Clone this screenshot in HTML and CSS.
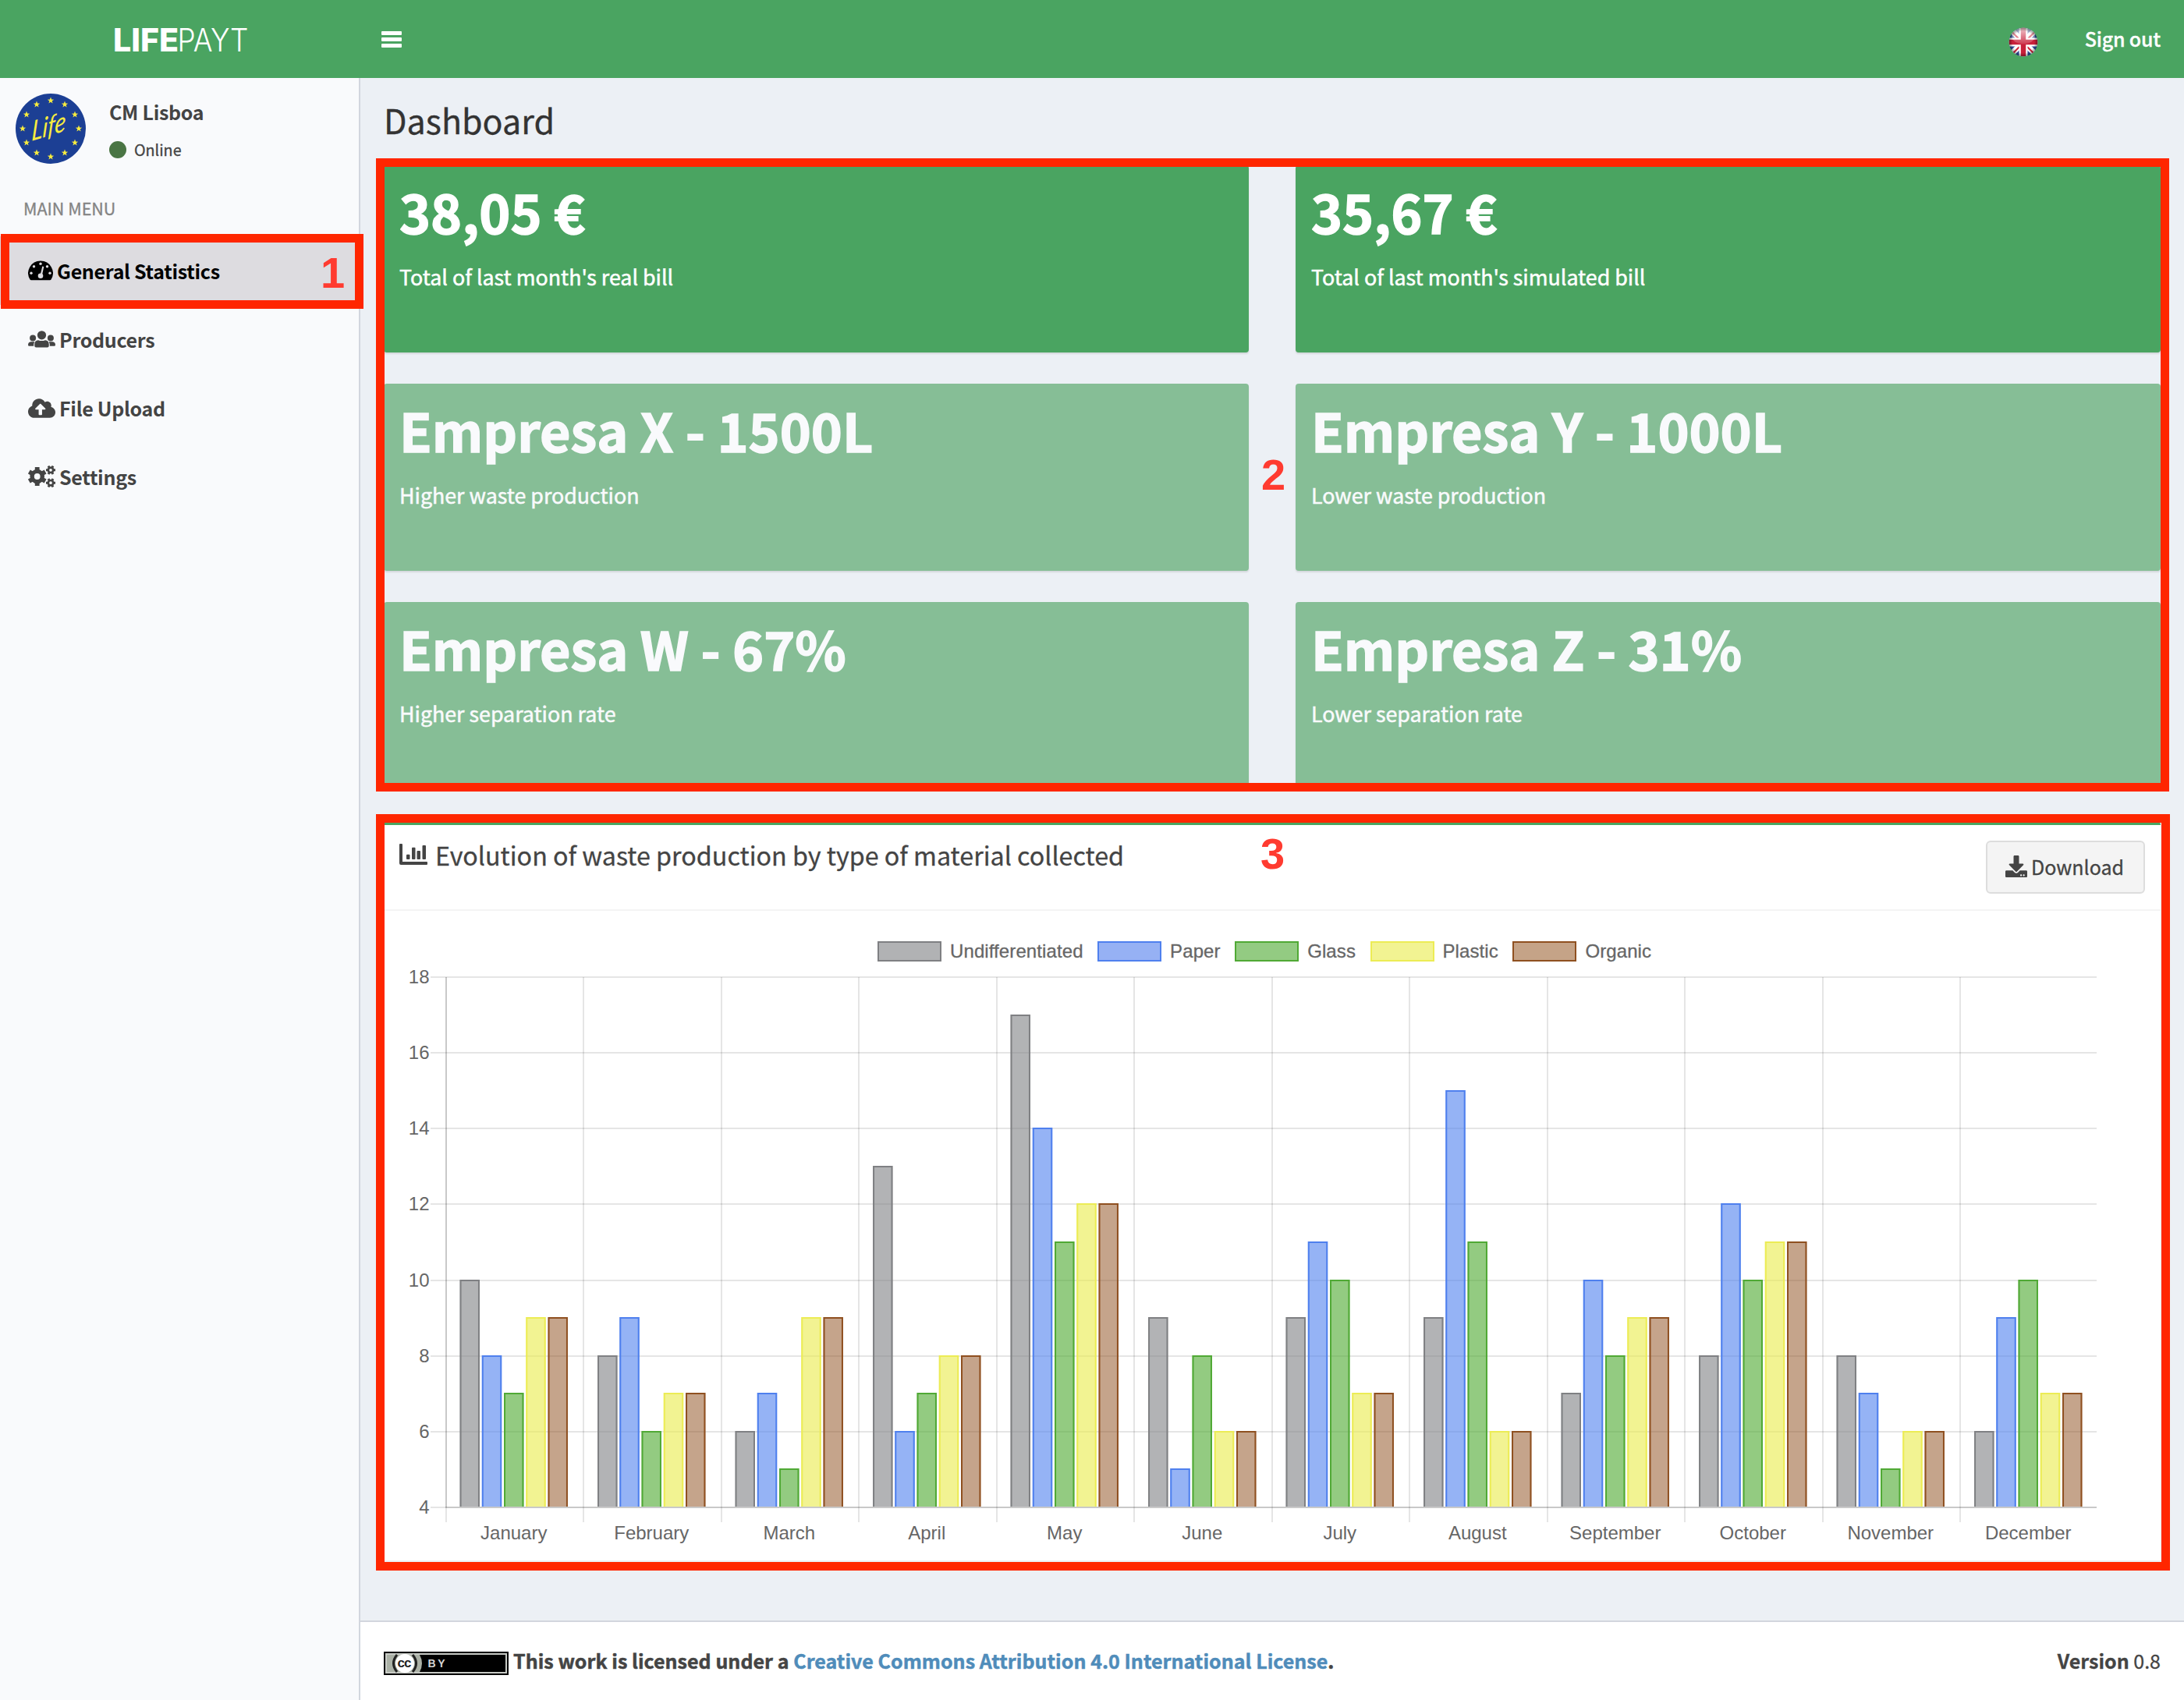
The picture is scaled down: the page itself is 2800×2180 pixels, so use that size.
FILE: index.html
```html
<!DOCTYPE html>
<html lang="en">
<head>
<meta charset="utf-8">
<title>LIFEPAYT - Dashboard</title>
<link rel="stylesheet" href="styles.css">
</head>
<body>
<div class="page">
  <header class="topbar">
    <a class="logo">
      <svg class="logo-mark" width="190" height="60" viewBox="-6 -10 190 60">
        <text class="logo-life" x="-1" y="35.500" textLength="84" lengthAdjust="spacingAndGlyphs">LIFE</text>
        <text class="logo-payt" x="81.500" y="35.500" textLength="91" lengthAdjust="spacingAndGlyphs">PAYT</text>
      </svg>
    </a>
    <button class="toggle" aria-label="Toggle navigation"><span></span><span></span><span></span></button>
    <nav class="top-nav">
      <svg class="flag" width="38" height="38" viewBox="-19 -19 38 38">
        <defs>
          <clipPath id="round"><circle r="18.3"/></clipPath>
          <linearGradient id="shine" x1="0" y1="0" x2="0" y2="1">
            <stop offset="0" stop-color="#fff" stop-opacity=".75"/>
            <stop offset="1" stop-color="#fff" stop-opacity=".12"/>
          </linearGradient>
          <radialGradient id="rim"><stop offset=".75" stop-color="#000" stop-opacity="0"/><stop offset="1" stop-color="#000" stop-opacity=".4"/></radialGradient>
        </defs>
        <g clip-path="url(#round)">
          <rect x="-19" y="-19" width="38" height="38" fill="#2f4f9f"/>
          <path d="M-19-19 19 19M19-19-19 19" stroke="#fff" stroke-width="7.5"/>
          <path d="M-19-17.500 0 1.500M19-17.500 0 1.500M-19 20 0 1M19 20 0 1" stroke="#d0283c" stroke-width="2.200"/>
          <path d="M0-19V19M-19 0H19" stroke="#fff" stroke-width="11"/>
          <path d="M0-19V19M-19 0H19" stroke="#c8203a" stroke-width="6.500"/>
          <ellipse cx="0" cy="-8" rx="15" ry="10.500" fill="url(#shine)"/>
          <circle r="18.500" fill="url(#rim)"/>
        </g>
      </svg>
      <a class="sign-out">Sign out</a>
    </nav>
  </header>

  <aside class="sidebar">
    <div class="user-panel">
      <svg class="avatar" width="90" height="90" viewBox="-45 -45 90 90">
        <defs><path id="star" d="M0-4.400 1.100-1.400 4.200-1.300 1.700.600 2.600 3.600 0 1.800-2.600 3.600-1.700.600-4.200-1.300-1.100-1.400Z"/></defs>
        <circle r="45" fill="#1c3f94"/>
        <g fill="#f7ec3f">
          <use href="#star" x="0" y="-36"/><use href="#star" x="18" y="-31"/><use href="#star" x="31" y="-18"/>
          <use href="#star" x="36" y="0"/><use href="#star" x="31" y="18"/><use href="#star" x="18" y="31"/>
          <use href="#star" x="0" y="36"/><use href="#star" x="-18" y="31"/><use href="#star" x="-31" y="18"/>
          <use href="#star" x="-36" y="0"/><use href="#star" x="-31" y="-18"/><use href="#star" x="-18" y="-31"/>
        </g>
        <text class="avatar-word" transform="translate(-25 16) rotate(-17) skewX(-20)" textLength="46" lengthAdjust="spacingAndGlyphs">Life</text>
      </svg>
      <div class="user-info">
        <p class="user-name">CM Lisboa</p>
        <p class="user-status"><i class="dot"></i>Online</p>
      </div>
    </div>
    <h2 class="menu-title">MAIN MENU</h2>
    <ul class="menu">
      <li class="menu-item active">
        <svg class="icon" width="32" height="26" viewBox="0 0 32 26">
          <path d="M16 .5A15.700 15.700 0 0 0 2.400 24.300Q2.900 25.200 4 25.200H28Q29.100 25.200 29.600 24.300A15.700 15.700 0 0 0 16 .5Z" fill="currentColor"/>
          <g class="cut"><circle cx="16" cy="4.300" r="1.700"/><circle cx="7.500" cy="7.800" r="1.700"/><circle cx="24.500" cy="7.800" r="1.700"/><circle cx="4" cy="16.300" r="1.700"/><circle cx="28" cy="16.300" r="1.700"/><circle cx="16" cy="19.800" r="3.300"/><path d="M18.300 7.500 20.300 8.100 18 18.500 15.800 18Z"/></g>
        </svg>
        <span>General Statistics</span>
      </li>
      <li class="menu-item">
        <svg class="icon" width="35" height="22" viewBox="0 0 35 22">
          <g fill="currentColor"><circle cx="17.500" cy="5.800" r="5.600"/><circle cx="6.100" cy="9.500" r="4"/><circle cx="28.900" cy="9.500" r="4"/>
          <path d="M13 12.200Q17.500 14 22 12.200 26.700 12.400 26.700 17.500V19.500Q26.700 21.500 24.700 21.500H10.300Q8.300 21.500 8.300 19.500V17.500Q8.300 12.400 13 12.200Z"/>
          <path d="M3.500 14.200H8.300Q7.100 16 7.200 19.700H1.500Q0 19.700 0 18.200 0 14.600 3.500 14.200ZM31.500 14.200H26.700Q27.900 16 27.800 19.700H33.500Q35 19.700 35 18.200 35 14.600 31.500 14.200Z"/></g>
        </svg>
        <span>Producers</span>
      </li>
      <li class="menu-item">
        <svg class="icon" width="35" height="25" viewBox="0 32 640 448">
          <path fill="currentColor" d="M537.600 226.600c4.100-10.700 6.400-22.400 6.400-34.600 0-53-43-96-96-96-19.700 0-38.100 6-53.300 16.200C367 64.200 315.300 32 256 32c-88.400 0-160 71.600-160 160 0 2.700.1 5.400.2 8.100C40.200 219.800 0 273.200 0 336c0 79.500 64.500 144 144 144h368c70.700 0 128-57.300 128-128 0-61.900-44-113.600-102.400-125.400zM393.400 288H328v112c0 8.800-7.200 16-16 16h-48c-8.800 0-16-7.200-16-16V288h-65.400c-14.300 0-21.400-17.200-11.300-27.300l105.400-105.400c6.200-6.200 16.400-6.200 22.600 0l105.400 105.400c10.100 10.100 2.900 27.300-11.300 27.300z"/>
        </svg>
        <span>File Upload</span>
      </li>
      <li class="menu-item">
        <svg class="icon gears" width="35" height="28" viewBox="0 0 35 28">
          <defs>
            <g id="gear-lg"><circle r="6.600" fill="none" stroke="currentColor" stroke-width="5.400"/><path d="M0-12V-7M0 12V7M10.400-6 6-3.500M-10.400 6-6 3.500M10.400 6 6 3.500M-10.400-6-6-3.500" stroke="currentColor" stroke-width="5.800" fill="none"/></g>
            <g id="gear-sm"><circle r="3.200" fill="none" stroke="currentColor" stroke-width="2.700"/><path d="M6 0H4M-6 0H-4M3-5.200 2-3.500M-3-5.200-2-3.500M3 5.200 2 3.500M-3 5.200-2 3.500" stroke="currentColor" stroke-width="3" fill="none"/></g>
          </defs>
          <use href="#gear-lg" x="11.700" y="14"/>
          <use href="#gear-sm" x="29" y="5.800"/>
          <use href="#gear-sm" x="29" y="22.200"/>
        </svg>
        <span>Settings</span>
      </li>
    </ul>
  </aside>

  <main class="content">
    <h1 class="page-title">Dashboard</h1>
    <section class="cards">
      <article class="card"><h3>38,05 €</h3><p>Total of last month's real bill</p></article>
      <article class="card"><h3>35,67 €</h3><p>Total of last month's simulated bill</p></article>
      <article class="card soft"><h3>Empresa X - 1500L</h3><p>Higher waste production</p></article>
      <article class="card soft"><h3>Empresa Y - 1000L</h3><p>Lower waste production</p></article>
      <article class="card soft"><h3>Empresa W - 67%</h3><p>Higher separation rate</p></article>
      <article class="card soft"><h3>Empresa Z - 31%</h3><p>Lower separation rate</p></article>
    </section>
    <section class="box">
      <header class="box-header">
        <h3 class="box-title">
          <svg width="36" height="28" viewBox="0 0 36 28" fill="currentColor"><path d="M1 0H3Q4 0 4 1V23H35Q36 23 36 24V26Q36 27 35 27H2Q0 27 0 25V1Q0 0 1 0Z"/><rect x="9" y="13.700" width="4.500" height="6.300" rx="1"/><rect x="16" y="4.700" width="4.500" height="15.300" rx="1"/><rect x="22.500" y="9" width="4.500" height="11" rx="1"/><rect x="29.500" y="2" width="4.500" height="18" rx="1"/></svg>
          <span>Evolution of waste production by type of material collected</span>
        </h3>
        <button class="btn-download">
          <svg width="28" height="28" viewBox="0 0 512 512"><path fill="currentColor" d="M216 0h80c13.300 0 24 10.700 24 24v168h87.700c17.800 0 26.700 21.500 14.100 34.100L269.700 378.300c-7.500 7.500-19.800 7.500-27.300 0L90.100 226.100c-12.600-12.600-3.700-34.100 14.100-34.100H192V24c0-13.300 10.700-24 24-24zm296 376v112c0 13.300-10.700 24-24 24H24c-13.300 0-24-10.700-24-24V376c0-13.300 10.700-24 24-24h146.700l49 49c20.100 20.100 52.500 20.100 72.600 0l49-49H488c13.300 0 24 10.700 24 24zm-124 88c0-11-9-20-20-20s-20 9-20 20 9 20 20 20 20-9 20-20zm64 0c0-11-9-20-20-20s-20 9-20 20 9 20 20 20 20-9 20-20z"/></svg>
          <span>Download</span>
        </button>
      </header>
      <ul class="legend">
        <li class="undifferentiated"><i></i>Undifferentiated</li>
        <li class="paper"><i></i>Paper</li>
        <li class="glass"><i></i>Glass</li>
        <li class="plastic"><i></i>Plastic</li>
        <li class="organic"><i></i>Organic</li>
      </ul>
      <svg class="chart" id="chart" width="2278" height="768" viewBox="0 0 2278 768"></svg>
    </section>
  </main>

  <footer class="footer">
    <div class="license">
      <svg class="cc-badge" width="160" height="30" viewBox="0 0 160 30">
        <rect width="160" height="30" fill="#000"/>
        <rect x="2" y="2" width="156" height="26" fill="#c8cbc6"/>
        <rect x="4" y="4" width="152" height="22" fill="#000"/>
        <path d="M4 4H46Q52 15 46 26H4Z" fill="#abb1a6"/>
        <circle cx="27" cy="15" r="12" fill="#fff"/>
        <path d="M17 4Q8 15 17 26M37 4Q46 15 37 26" fill="none" stroke="#222" stroke-width="3"/>
        <text class="cc" x="17.500" y="20" textLength="18">cc</text>
        <text class="by" x="56.500" y="20" textLength="22">BY</text>
      </svg>
      <strong>This work is licensed under a <a>Creative Commons Attribution 4.0 International License</a>.</strong>
    </div>
    <div class="version"><strong>Version</strong> 0.8</div>
  </footer>

  <div class="callout callout-1"><b>1</b></div>
  <div class="callout callout-2"><b>2</b></div>
  <div class="callout callout-3"><b>3</b></div>
</div>
<script src="chart.js"></script>
</body>
</html>
```
FILE: styles.css
```css
* { box-sizing: border-box; }
body, h1, h2, h3, p, ul { margin: 0; padding: 0; }
ul { list-style: none; }
body {
  font-family: "Noto Sans CJK SC", "Open Sans", sans-serif;
  font-size: 25px;
  color: #444;
  background: #ecf0f5;
  -webkit-text-stroke: .3px;
}
svg { display: block; flex: none; -webkit-text-stroke: 0; }
button { font: inherit; color: inherit; }

.page {
  position: relative;
  display: grid;
  grid-template: 100px 1fr 102px / 462px 1fr;
  width: 2800px;
  height: 2180px;
  overflow: hidden;
}

/* top bar */
.topbar {
  grid-column: 1 / 3;
  display: flex;
  align-items: center;
  background: #4aa461;
  color: #fff;
}
.logo { width: 489px; padding-left: 140px; }
.logo-life { font: 800 40.5px Inter, sans-serif; fill: #fff; }
.logo-payt { font: 300 40.5px Inter, sans-serif; fill: #fff; }
.toggle {
  display: flex;
  flex-direction: column;
  gap: 3px;
  width: 26px;
  padding: 0;
  border: 0;
  background: none;
}
.toggle span { height: 5px; border-radius: 1px; background: #fff; }
.top-nav { display: flex; align-items: center; gap: 60px; margin-left: auto; padding-right: 30px; }
.flag { margin-top: 8px; }
.sign-out { margin-top: -2px; font-weight: 500; line-height: 40px; letter-spacing: -.2px; }

/* sidebar */
.sidebar {
  grid-row: 2 / 4;
  border-right: 2px solid #d2d6de;
  background: #f9fafc;
}
.user-panel { display: flex; gap: 30px; height: 120px; padding: 20px; }
.avatar-word { font: italic 400 34px Lato, sans-serif; fill: #f7ec3f; }
.user-info { padding-top: 8px; line-height: 30px; }
.user-name { font-weight: 700; letter-spacing: -.3px; -webkit-text-stroke: 0; }
.user-status { display: flex; align-items: center; margin-top: 19px; font-size: 19.7px; }
.dot { width: 22px; height: 22px; margin-right: 10px; border-radius: 50%; background: #4a7544; }
.menu-title {
  margin: 27px 0 16px 30px;
  font-size: 21.5px;
  font-weight: 400;
  line-height: 40px;
  color: #848484;
}
.menu-item {
  display: flex;
  align-items: center;
  gap: 5px;
  height: 88px;
  padding-left: 36px;
  font-weight: 700;
  letter-spacing: -.3px;
  -webkit-text-stroke: 0;
}
.menu-item.active { color: #000; background: #dddce0; }
.cut { fill: #dddce0; }

/* content */
.content { padding: 23px 30px 0 30px; }
.page-title { margin-bottom: 29px; font-size: 43px; font-weight: 400; line-height: 60px; color: #333; }
.cards {
  display: grid;
  grid-template-columns: 1fr 1fr;
  grid-auto-rows: 240px;
  gap: 40px 60px;
}
.card {
  padding: 21px 20px;
  border-radius: 4px;
  background: #4aa461;
  box-shadow: 0 2px 2px rgba(0, 0, 0, .1);
  color: #fff;
}
.card.soft { background: #86be96; color: #f9fafc; }
.card h3 { font-size: 68px; font-weight: 700; line-height: 76px; -webkit-text-stroke: 1.5px; }
.card p { margin-top: 26px; font-size: 26.8px; line-height: 40px; -webkit-text-stroke: .5px; }

.box {
  margin-top: 40px;
  border-top: 6px solid #4aa461;
  border-radius: 6px 6px 0 0;
  background: #fff;
}
.box-header {
  display: flex;
  justify-content: space-between;
  height: 110px;
  padding: 18px 20px 0 20px;
  border-bottom: 2px solid #f4f4f4;
}
.box-title { display: flex; align-items: center; gap: 10px; height: 40px; font-size: 32.25px; font-weight: 400; line-height: 40px; }
.btn-download {
  display: flex;
  align-items: center;
  gap: 5px;
  width: 204px;
  height: 68px;
  margin-top: 2px;
  padding: 0 0 2px 23px;
  border: 2px solid #ddd;
  border-radius: 6px;
  background: #f4f4f4;
}
.legend {
  display: flex;
  gap: 18.5px;
  padding: 39px 0 0 633px;
  font: 24px/26px "Liberation Sans", Arial, sans-serif;
  color: #666;
}
.legend li { display: flex; gap: 11px; letter-spacing: .1px; }
.legend i { width: 82px; height: 26px; border: 2px solid; }
.undifferentiated i { background: #b1b2b4; border-color: #7f8083; }
.paper i { background: #96b1f4; border-color: #4f80ee; }
.glass i { background: #93cb82; border-color: #50a935; }
.plastic i { background: #f2f392; border-color: #ecec55; }
.organic i { background: #c5a387; border-color: #8f5020; }

.grid-line { stroke: rgba(0, 0, 0, .1); stroke-width: 2; }
.axis-line { stroke: rgba(0, 0, 0, .12); stroke-width: 2; }
.tick { font: 24px "Liberation Sans", Arial, sans-serif; fill: #666; -webkit-text-stroke: .3px #666; }
.tick-y { text-anchor: end; }
.tick-x { text-anchor: middle; }
.bar-edge { fill: none; stroke-width: 2; }

/* footer */
.footer {
  grid-column: 2;
  display: flex;
  justify-content: space-between;
  padding: 29px 30px 0;
  border-top: 2px solid #d2d6de;
  background: #fff;
  line-height: 40px;
}
.license { display: flex; gap: 6px; }
.license strong { letter-spacing: .03px; -webkit-text-stroke: .5px; }
.license a { color: #4f8cba; }
.cc-badge { margin-top: 9px; }
.cc { font: 700 17px "Liberation Sans", sans-serif; fill: #222; }
.by { font: 700 14px "Liberation Sans", sans-serif; fill: #d5d5d5; }

/* numbered annotations over the page */
.callout { position: absolute; border: 11px solid #ff2600; }
.callout b {
  position: absolute;
  font: 700 56px/56px "Liberation Sans", Arial, sans-serif;
  color: #ff3b30;
  -webkit-text-stroke: 0;
}
.callout-1 { left: 1px; top: 300px; width: 465px; height: 96px; }
.callout-1 b { left: 399px; top: 11px; }
.callout-2 { left: 482px; top: 203px; width: 2299px; height: 812px; }
.callout-2 b { left: 1124px; top: 367px; }
.callout-3 { left: 482px; top: 1044px; width: 2300px; height: 970px; }
.callout-3 b { left: 1123px; top: 12px; }
```
FILE: chart.js
```js
const months = ["January", "February", "March", "April", "May", "June", "July",
  "August", "September", "October", "November", "December"];
const series = [
  { fill: "rgba(127,128,131,.6)", edge: "#7f8083", data: [10, 8, 6, 13, 17, 9, 9, 9, 7, 8, 8, 6] },
  { fill: "rgba(79,128,238,.6)", edge: "#4f80ee", data: [8, 9, 7, 6, 14, 5, 11, 15, 10, 12, 7, 9] },
  { fill: "rgba(75,168,45,.6)", edge: "#50a935", data: [7, 6, 5, 7, 11, 8, 10, 11, 8, 10, 5, 10] },
  { fill: "rgba(233,235,73,.6)", edge: "#ecec55", data: [9, 7, 9, 8, 12, 6, 7, 6, 9, 11, 6, 7] },
  { fill: "rgba(143,80,32,.52)", edge: "#8f5020", data: [9, 7, 9, 8, 12, 6, 7, 6, 9, 11, 6, 7] }
];
const left = 78.5, top0 = 20, bottom = 700, step = 176.5, min = 4, max = 18;
const y = v => Math.round(bottom - (v - min) * (bottom - top0) / (max - min));
const svg = document.getElementById("chart");

function add(tag, attrs, text) {
  const el = document.createElementNS("http://www.w3.org/2000/svg", tag);
  for (const key in attrs) el.setAttribute(key, attrs[key]);
  if (text !== undefined) el.textContent = text;
  svg.appendChild(el);
}

for (let v = min; v <= max; v += 2) {
  add("line", { class: "grid-line", x1: 60, x2: 2196, y1: y(v), y2: y(v) });
  add("text", { class: "tick tick-y", x: 58.5, y: y(v) + 7.5 }, v);
}
months.forEach((name, i) => {
  const x = Math.round(left + i * step) + 1;
  add("line", { class: "grid-line", x1: x, x2: x, y1: top0, y2: bottom + 19 });
  add("text", { class: "tick tick-x", x: left + (i + .5) * step, y: bottom + 41 }, name);
});
add("line", { class: "axis-line", x1: 80, x2: 80, y1: top0, y2: bottom });
add("line", { class: "axis-line", x1: 79, x2: 2196, y1: bottom, y2: bottom });

const slot = step * .8 / series.length, width = slot * .9;
series.forEach((s, k) => s.data.forEach((v, i) => {
  const x = left + i * step + step * .1 + slot * (k + .05);
  const t = y(v), b = bottom - 1;
  add("rect", { x: x, y: t - 1, width: width, height: b - t + 1, fill: s.fill });
  add("path", { class: "bar-edge", stroke: s.edge, d: `M${x + 1} ${b}V${t}H${x + width - 1}V${b}` });
}));
```
